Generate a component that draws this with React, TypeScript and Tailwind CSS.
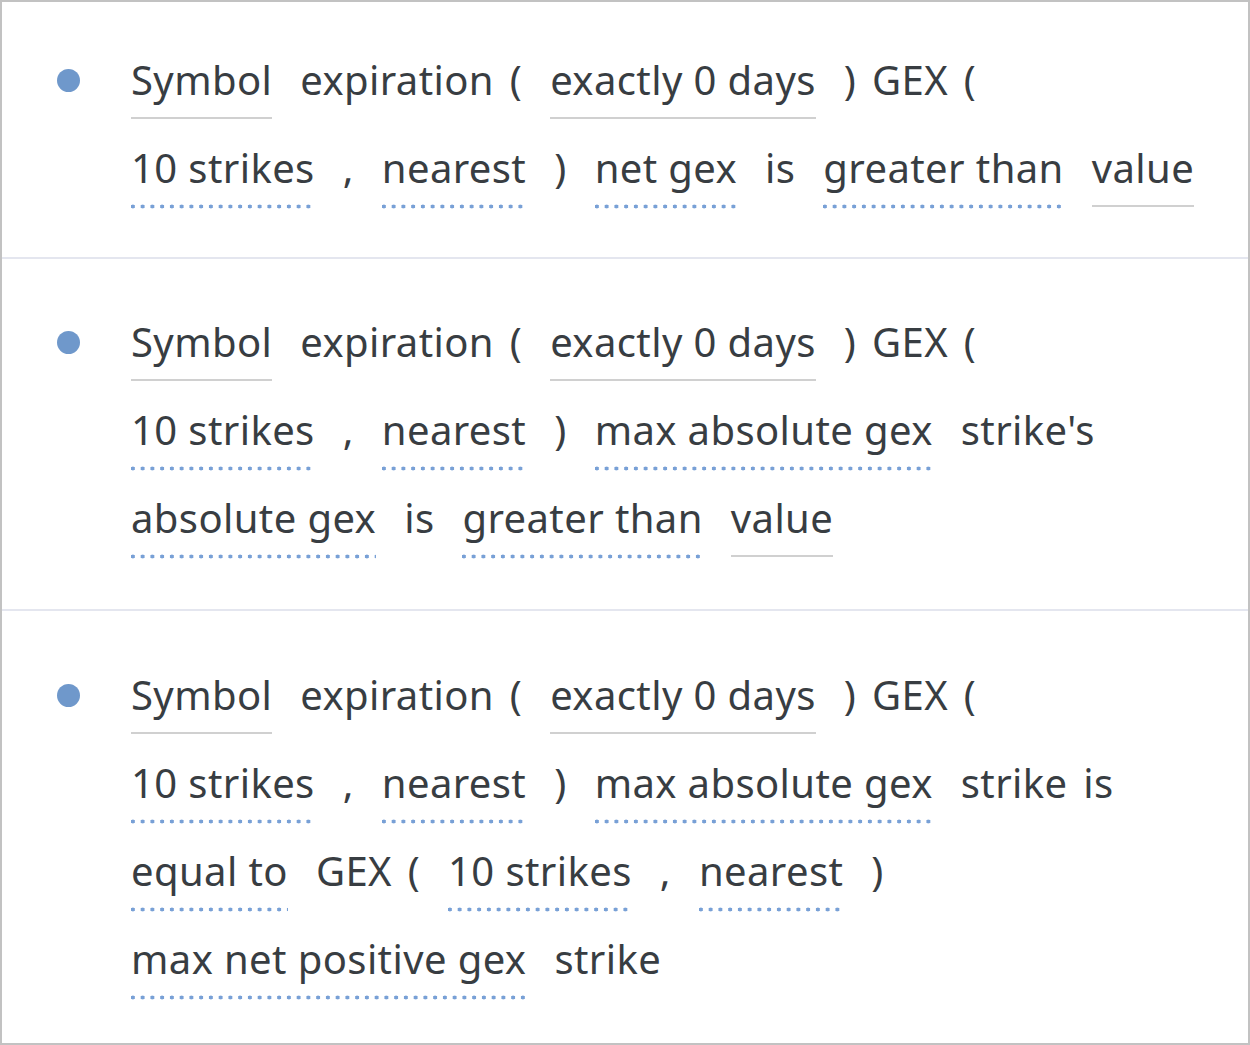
type Piece = { t: string; u?: 'solid' | 'dots' }

const firstLine: Piece[] = [
  { t: 'Symbol', u: 'solid' },
  { t: 'expiration (' },
  { t: 'exactly 0 days', u: 'solid' },
  { t: ') GEX (' },
]

const blocks: { pt: string; pb: string; border: boolean; lines: Piece[][] }[] = [
  {
    pt: 'pt-[54px]',
    pb: 'pb-[25px]',
    border: false,
    lines: [
      firstLine,
      [
        { t: '10 strikes', u: 'dots' },
        { t: ',' },
        { t: 'nearest', u: 'dots' },
        { t: ')' },
        { t: 'net gex', u: 'dots' },
        { t: 'is' },
        { t: 'greater than', u: 'dots' },
        { t: 'value', u: 'solid' },
      ],
    ],
  },
  {
    pt: 'pt-[59px]',
    pb: 'pb-[27px]',
    border: true,
    lines: [
      firstLine,
      [
        { t: '10 strikes', u: 'dots' },
        { t: ',' },
        { t: 'nearest', u: 'dots' },
        { t: ')' },
        { t: 'max absolute gex', u: 'dots' },
        { t: "strike's" },
      ],
      [
        { t: 'absolute gex', u: 'dots' },
        { t: 'is' },
        { t: 'greater than', u: 'dots' },
        { t: 'value', u: 'solid' },
      ],
    ],
  },
  {
    pt: 'pt-[60px]',
    pb: 'pb-[20px]',
    border: true,
    lines: [
      firstLine,
      [
        { t: '10 strikes', u: 'dots' },
        { t: ',' },
        { t: 'nearest', u: 'dots' },
        { t: ')' },
        { t: 'max absolute gex', u: 'dots' },
        { t: 'strike is' },
      ],
      [
        { t: 'equal to', u: 'dots' },
        { t: 'GEX (' },
        { t: '10 strikes', u: 'dots' },
        { t: ',' },
        { t: 'nearest', u: 'dots' },
        { t: ')' },
      ],
      [
        { t: 'max net positive gex', u: 'dots' },
        { t: 'strike' },
      ],
    ],
  },
]

function Token({ p }: { p: Piece }) {
  if (p.u === 'solid') {
    return (
      <span className="block h-fit whitespace-pre leading-[48px] pb-[13px] border-b-2 border-[#d0d0d0]">
        {p.t}
      </span>
    )
  }
  if (p.u === 'dots') {
    return (
      <span className="block h-fit whitespace-pre leading-[48px] pb-[17px] bg-[radial-gradient(circle,#78a0d6_1.8px,transparent_2.2px)] bg-[length:9.75px_5px] bg-repeat-x bg-[position:-3px_100%]">
        {p.t}
      </span>
    )
  }
  return (
    <span className="block h-fit whitespace-pre leading-[48px] [word-spacing:5px]">
      {p.t}
    </span>
  )
}

export default function App() {
  return (
    <div className="w-[1250px] h-[1045px] bg-white border-2 border-[#c2c2c2] flex flex-col text-[40px] tracking-[0.4px] text-[#383d42] font-['Noto_Sans',sans-serif]">
      {blocks.map((b, i) => (
        <div
          key={i}
          className={`flex pl-[55px] ${b.pt} ${b.pb} ${b.border ? 'border-t-2 border-[#e4e6ef]' : ''}`}
        >
          <div className="w-[23px] shrink-0 pt-[13px]">
            <div className="w-[23px] h-[23px] rounded-full bg-[#6f98cb]" />
          </div>
          <div className="ml-[51px] flex flex-col">
            {b.lines.map((line, j) => (
              <div key={j} className="flex h-[88px] gap-x-[28px]">
                {line.map((p, k) => (
                  <Token key={k} p={p} />
                ))}
              </div>
            ))}
          </div>
        </div>
      ))}
    </div>
  )
}
